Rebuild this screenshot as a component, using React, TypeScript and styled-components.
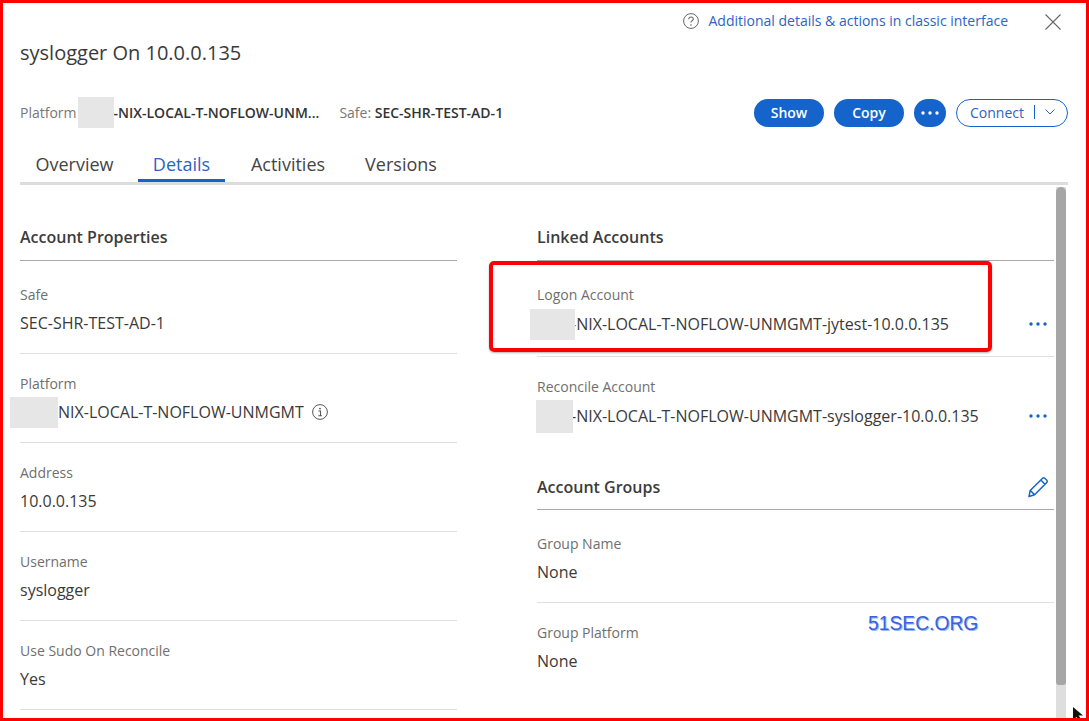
import React from 'react'
import styled, { createGlobalStyle } from 'styled-components'

const GlobalStyle = createGlobalStyle`
  html, body {
    margin: 0;
    padding: 0;
    background: #fff;
  }
  body {
    font-family: "Open Sans", "Noto Sans", sans-serif;
    color: #333;
  }
`

const blue = '#1464cc'

const Frame = styled.div`
  position: relative;
  box-sizing: border-box;
  width: 1089px;
  height: 721px;
  border: 3px solid #ff0000;
  background: #fff;
  overflow: hidden;
  display: flex;
  flex-direction: column;
`

const TopBar = styled.div`
  display: flex;
  justify-content: flex-end;
  align-items: center;
  height: 32px;
  padding: 3px 25px 0 0;
`

const ClassicLink = styled.a`
  display: flex;
  align-items: center;
  font-size: 14px;
  color: #2b63c6;
  margin-right: 37px;
  margin-top: -4px;
`

const HelpIcon = styled.svg`
  width: 16px;
  height: 16px;
  margin-right: 10px;
  margin-top: 2px;
`

const Title = styled.h1`
  margin: 0;
  padding: 0 0 0 17px;
  height: 37px;
  box-sizing: border-box;
  font-size: 20px;
  line-height: 30px;
  font-weight: 400;
  color: #3a3a3a;
`

const MetaRow = styled.div`
  display: flex;
  align-items: center;
  justify-content: space-between;
  height: 30px;
  margin-top: 23px;
  padding: 0 18px 0 17px;
`

const MetaInfo = styled.div`
  display: flex;
  align-items: center;
  margin-top: -1px;
  font-size: 14px;
  color: #777;
`

const MetaValue = styled.span`
  font-weight: 600;
  font-size: 14px;
  color: #333;
`

const MetaSafe = styled.span`
  margin-left: 20px;
`

const Redact = styled.span<{ $w: number; $h: number; $over?: number; $left?: number }>`
  position: relative;
  display: inline-block;
  flex: none;
  width: ${p => p.$w}px;
  height: ${p => p.$h}px;
  margin-left: ${p => p.$left ?? 0}px;
  margin-right: ${p => -(p.$over ?? 0)}px;
  background: #e6e6e6;
`

const Actions = styled.div`
  display: flex;
  align-items: center;
  gap: 10px;
`

const PillButton = styled.button`
  width: 70px;
  height: 28px;
  border: 0;
  border-radius: 14px;
  background: ${blue};
  color: #fff;
  font-family: inherit;
  font-size: 14px;
  font-weight: 600;
  padding: 0 0 2px;
`

const MoreButton = styled.button`
  width: 32px;
  height: 28px;
  border: 0;
  border-radius: 14px;
  background: ${blue};
  display: flex;
  align-items: center;
  justify-content: center;
  padding: 0;
`

const ConnectButton = styled.button`
  display: flex;
  align-items: center;
  box-sizing: border-box;
  width: 112px;
  height: 28px;
  border: 1px solid ${blue};
  border-radius: 14px;
  background: #fff;
  color: #2b63c6;
  font-family: inherit;
  font-size: 14px;
  padding: 0 0 2px 13px;
`

const ConnectDivider = styled.span`
  width: 1px;
  height: 14px;
  background: ${blue};
  margin: 0 10px;
`

const Tabs = styled.div`
  display: flex;
  height: 38px;
  margin: 16px 18px 0 17px;
  border-bottom: 3px solid #dcdcdc;
`

const Tab = styled.div<{ $active?: boolean; $w: number; $pr?: number }>`
  width: ${p => p.$w}px;
  height: 38px;
  box-sizing: border-box;
  padding-right: ${p => p.$pr ?? 0}px;
  text-align: center;
  font-size: 18px;
  line-height: 41px;
  color: ${p => (p.$active ? '#2b63c6' : '#444')};
  border-bottom: 3px solid ${p => (p.$active ? blue : 'transparent')};
`

const Body = styled.div`
  flex: 1;
  min-height: 0;
  display: flex;
  padding: 2px 0 0 17px;
  overflow: hidden;
`

const Columns = styled.div`
  width: 1034px;
  display: grid;
  grid-template-columns: 437px 517px;
  column-gap: 80px;
  align-items: start;
`

const Column = styled.div`
  display: flex;
  flex-direction: column;
`

const SectionHead = styled.div<{ $h?: number; $top?: number; $right?: number }>`
  display: flex;
  align-items: center;
  justify-content: space-between;
  box-sizing: border-box;
  height: ${p => p.$h ?? 74}px;
  padding-top: ${p => p.$top ?? 27}px;
  padding-right: ${p => p.$right ?? 0}px;
  border-bottom: 1px solid #a9a9a9;
  font-size: 16px;
  font-weight: 600;
  color: #3c3c3c;
`

const Field = styled.div<{ $h?: number; $top?: number; $plain?: boolean }>`
  box-sizing: border-box;
  height: ${p => p.$h ?? 89}px;
  padding-top: ${p => p.$top ?? 20}px;
  border-bottom: ${p => (p.$plain ? '0' : '1px solid #dfdfdf')};
`

const Label = styled.div`
  font-size: 14px;
  line-height: 19px;
  color: #6f6f6f;
`

const Value = styled.div`
  display: flex;
  align-items: center;
  height: 24px;
  margin-top: 7px;
  font-size: 16px;
  color: #3a3a3a;
  white-space: nowrap;
`

const ValueRow = styled.div`
  display: flex;
  align-items: center;
  justify-content: space-between;
  margin-top: 8px;
  padding-right: 7px;

  ${Value} {
    margin-top: 0;
  }
`

const RedactSlot = styled.span<{ $shift: number }>`
  margin-left: ${p => p.$shift}px;
  display: inline-flex;
  position: relative;
  z-index: 1;
`

const InfoIcon = styled.svg`
  width: 16px;
  height: 16px;
  margin-left: 8px;
`

const Scrollbar = styled.div`
  width: 10px;
  height: 100%;
  margin-left: 2px;
  background: #dedede;
`

const ScrollThumb = styled.div`
  height: 498px;
  background: #a6a6a6;
  border-radius: 5px 5px 3px 3px;
`

const Highlight = styled.div`
  position: absolute;
  left: 486px;
  top: 258px;
  width: 503px;
  height: 91px;
  box-sizing: border-box;
  border: 4px solid #ff0000;
  border-radius: 5px;
  box-shadow: 0 1px 2px rgba(0, 0, 0, 0.3);
`

const Watermark = styled.div`
  position: absolute;
  left: 865px;
  top: 609px;
  font-family: "Liberation Sans", Arial, sans-serif;
  font-size: 19.3px;
  line-height: 24px;
  color: #3d5fe0;
  text-shadow: 1px 1px 0 #8fbdf0;
`

const Cursor = styled.svg`
  position: absolute;
  left: 1069px;
  top: 704px;
  width: 14px;
  height: 14px;
`

const Dots = ({ color }: { color: string }) => (
  <svg width="18" height="4" viewBox="0 0 18 4">
    <circle cx="2" cy="2" r="1.7" fill={color} />
    <circle cx="9" cy="2" r="1.7" fill={color} />
    <circle cx="16" cy="2" r="1.7" fill={color} />
  </svg>
)

const App = () => (
  <>
    <GlobalStyle />
    <Frame>
      <TopBar>
        <ClassicLink>
          <HelpIcon viewBox="0 0 16 16" fill="none">
            <circle cx="8" cy="8" r="7.4" stroke="#666" strokeWidth="1" />
            <path d="M5.7 6.2c0-1.3 1.1-2.2 2.3-2.2s2.3.9 2.3 2c0 1.8-2.3 1.7-2.3 3.4" stroke="#666" strokeWidth="1.1" />
            <circle cx="8" cy="12" r=".8" fill="#666" />
          </HelpIcon>
          Additional details &amp; actions in classic interface
        </ClassicLink>
        <svg width="16" height="16" viewBox="0 0 16 16">
          <path d="M.5.5l15 15M15.5.5l-15 15" stroke="#666" strokeWidth="1.1" fill="none" />
        </svg>
      </TopBar>
      <Title>syslogger On 10.0.0.135</Title>
      <MetaRow>
        <MetaInfo>
          Platform
          <Redact $w={36} $h={31} $left={1} />
          <MetaValue>-NIX-LOCAL-T-NOFLOW-UNM...</MetaValue>
          <MetaSafe>Safe:&nbsp;</MetaSafe>
          <MetaValue>SEC-SHR-TEST-AD-1</MetaValue>
        </MetaInfo>
        <Actions>
          <PillButton>Show</PillButton>
          <PillButton>Copy</PillButton>
          <MoreButton>
            <Dots color="#fff" />
          </MoreButton>
          <ConnectButton>
            Connect
            <ConnectDivider />
            <svg width="10" height="6" viewBox="0 0 10 6">
              <path d="M.5.5L5 5 9.5.5" stroke="#2b63c6" strokeWidth="1" fill="none" />
            </svg>
          </ConnectButton>
        </Actions>
      </MetaRow>
      <Tabs>
        <Tab $w={118} $pr={9}>Overview</Tab>
        <Tab $w={87} $active>Details</Tab>
        <Tab $w={126}>Activities</Tab>
        <Tab $w={100}>Versions</Tab>
      </Tabs>
      <Body>
        <Columns>
          <Column>
            <SectionHead>Account Properties</SectionHead>
            <Field $h={93} $top={24}>
              <Label>Safe</Label>
              <Value>SEC-SHR-TEST-AD-1</Value>
            </Field>
            <Field>
              <Label>Platform</Label>
              <Value>
                <RedactSlot $shift={-10}>
                  <Redact $w={48} $h={31} />
                </RedactSlot>
                NIX-LOCAL-T-NOFLOW-UNMGMT
                <InfoIcon viewBox="0 0 16 16" fill="none">
                  <circle cx="8" cy="8" r="7.4" stroke="#555" strokeWidth="1" />
                  <circle cx="8" cy="4.6" r=".9" fill="#555" />
                  <path d="M6.5 7h2v4.6M6.3 11.7h3.6" stroke="#555" strokeWidth="1.1" />
                </InfoIcon>
              </Value>
            </Field>
            <Field>
              <Label>Address</Label>
              <Value>10.0.0.135</Value>
            </Field>
            <Field>
              <Label>Username</Label>
              <Value>syslogger</Value>
            </Field>
            <Field>
              <Label>Use Sudo On Reconcile</Label>
              <Value>Yes</Value>
            </Field>
          </Column>
          <Column>
            <SectionHead>Linked Accounts</SectionHead>
            <Field $h={96} $top={24}>
              <Label>Logon Account</Label>
              <ValueRow>
                <Value>
                  <RedactSlot $shift={-7}>
                    <Redact $w={45} $h={31} $over={4} />
                  </RedactSlot>
                  -NIX-LOCAL-T-NOFLOW-UNMGMT-jytest-10.0.0.135
                </Value>
                <Dots color={blue} />
              </ValueRow>
            </Field>
            <Field $h={107} $plain>
              <Label>Reconcile Account</Label>
              <ValueRow>
                <Value>
                  <RedactSlot $shift={-1}>
                    <Redact $w={37} $h={33} $over={2} />
                  </RedactSlot>
                  -NIX-LOCAL-T-NOFLOW-UNMGMT-syslogger-10.0.0.135
                </Value>
                <Dots color={blue} />
              </ValueRow>
            </Field>
            <SectionHead $h={46} $top={0} $right={5}>
              Account Groups
              <svg width="22" height="22" viewBox="0 0 22 22" fill="none">
                <path d="M2 20.5l1.2-6L15.6 2.2a1.6 1.6 0 0 1 2.2 0l2 2a1.6 1.6 0 0 1 0 2.2L7.6 18.8l-5.6 1.7zM3.3 14.5l4.3 4.3M13.8 4l4.2 4.2" stroke={blue} strokeWidth="1.5" strokeLinejoin="round" />
              </svg>
            </SectionHead>
            <Field $h={93} $top={24}>
              <Label>Group Name</Label>
              <Value>None</Value>
            </Field>
            <Field $plain>
              <Label>Group Platform</Label>
              <Value>None</Value>
            </Field>
          </Column>
        </Columns>
        <Scrollbar>
          <ScrollThumb />
        </Scrollbar>
      </Body>
      <Highlight />
      <Watermark>51SEC.ORG</Watermark>
      <Cursor viewBox="0 0 14 14">
        <path d="M1 0v13l3.5-3 3 4 2-1.5-3-4H11z" fill="#111" />
      </Cursor>
    </Frame>
  </>
)

export default App
